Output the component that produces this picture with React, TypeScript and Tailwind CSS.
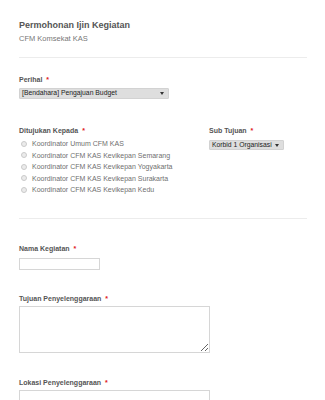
import React from "react";

const RADIO_OPTIONS = [
  "Koordinator Umum CFM KAS",
  "Koordinator CFM KAS Kevikepan Semarang",
  "Koordinator CFM KAS Kevikepan Yogyakarta",
  "Koordinator CFM KAS Kevikepan Surakarta",
  "Koordinator CFM KAS Kevikepan Kedu",
];

const Label = ({ text }: { text: string }) => (
  <div className="flex items-start text-[7px] leading-[9px] font-bold text-[#555]">
    <span>{text}</span>
    <span className="ml-[4px] text-[7px] text-[#e02020]">*</span>
  </div>
);

const FakeSelect = ({ value, className }: { value: string; className: string }) => (
  <div
    className={`flex items-center justify-between rounded-[1px] border border-[#d2d2d2] bg-[#dedede] pl-[2px] pr-[4px] text-[6.8px] leading-none text-[#222] ${className}`}
  >
    <span className="whitespace-nowrap">{value}</span>
    <svg width="4" height="3" viewBox="0 0 4 3" className="shrink-0">
      <path d="M0 0h4L2 3z" fill="#333" />
    </svg>
  </div>
);

export default function App() {
  return (
    <div
      className="min-h-[400px] w-[325px] overflow-hidden bg-white pl-[19px] pr-[18px] pt-[20px]"
      style={{ fontFamily: '"Liberation Sans", Arial, sans-serif' }}
    >
      <h1 className="text-[9px] leading-[11px] font-bold text-[#555]">Permohonan Ijin Kegiatan</h1>
      <p className="mt-[3px] text-[7.5px] leading-[10px] text-[#777]">CFM Komsekat KAS</p>

      <div className="mt-[13px] h-px bg-[#ececec]" />

      <div className="mt-[17px]">
        <Label text="Perihal" />
        <FakeSelect value="[Bendahara] Pengajuan Budget" className="mt-[4px] h-[11px] w-[150px]" />
      </div>

      <div className="mt-[27px] flex">
        <div className="w-[190px]">
          <Label text="Ditujukan Kepada" />
          <div className="mt-[3px] flex flex-col">
            {RADIO_OPTIONS.map((opt) => (
              <div key={opt} className="flex h-[11.5px] items-center">
                <span className="ml-[2px] h-[6px] w-[6px] rounded-full border border-[#cacaca] bg-[#ebebeb]" />
                <span className="ml-[5px] text-[7px] leading-none text-[#6f6f6f]">{opt}</span>
              </div>
            ))}
          </div>
        </div>
        <div>
          <Label text="Sub Tujuan" />
          <FakeSelect value="Korbid 1 Organisasi" className="mt-[5px] h-[10px] w-[75px]" />
        </div>
      </div>

      <div className="mt-[22px] h-px bg-[#ececec]" />

      <div className="mt-[25px]">
        <Label text="Nama Kegiatan" />
        <input
          type="text"
          className="mt-[5px] block h-[12px] w-[81px] border border-[#d6d6d6] bg-white outline-none"
        />
      </div>

      <div className="mt-[24px]">
        <Label text="Tujuan Penyelenggaraan" />
        <textarea className="mt-[3px] block h-[47px] w-[191px] border border-[#d6d6d6] bg-white outline-none" />
      </div>

      <div className="mt-[25px]">
        <Label text="Lokasi Penyelenggaraan" />
        <input
          type="text"
          className="mt-[3px] block h-[12px] w-[191px] border border-[#d6d6d6] bg-white outline-none"
        />
      </div>
    </div>
  );
}
